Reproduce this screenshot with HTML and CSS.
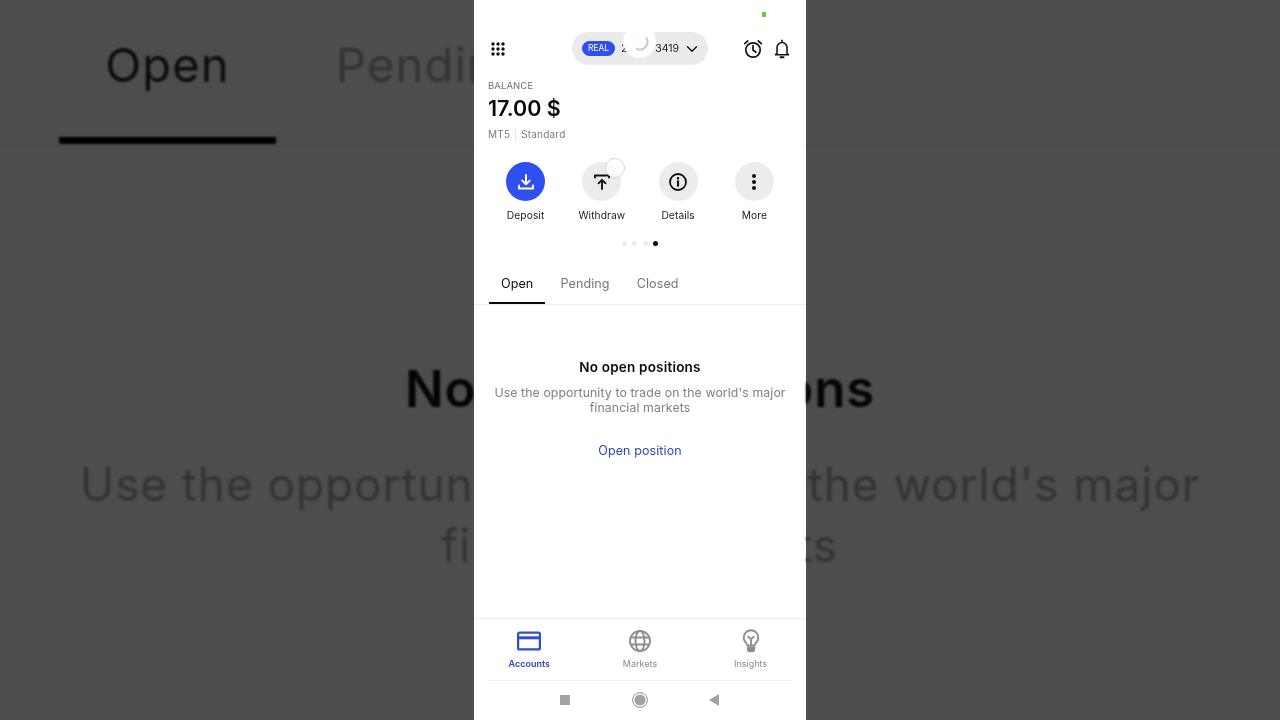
FILE: index.html
```html
<!DOCTYPE html>
<html lang="en">
<head>
<meta charset="utf-8">
<title>Accounts</title>
<link rel="stylesheet" href="styles.css">
</head>
<body>
<aside class="side side-left">
  <div class="bd-tabs">
    <div class="bd-tab bd-active">Open</div>
    <div class="bd-tab bd-muted">Pendin</div>
  </div>
  <div class="bd-title">No</div>
  <div class="bd-desc">Use the opportun</div>
  <div class="bd-desc bd-second">fi</div>
</aside>
<main class="phone">
  <span class="status-dot"></span>
  <header class="topbar">
    <svg class="grid-icon" width="14" height="14" viewBox="0 0 14 14" fill="#111"><circle cx="2" cy="2" r="1.700"/><circle cx="7" cy="2" r="1.700"/><circle cx="12" cy="2" r="1.700"/><circle cx="2" cy="7" r="1.700"/><circle cx="7" cy="7" r="1.700"/><circle cx="12" cy="7" r="1.700"/><circle cx="2" cy="12" r="1.700"/><circle cx="7" cy="12" r="1.700"/><circle cx="12" cy="12" r="1.700"/></svg>
    <div class="pill">
      <span class="badge">REAL</span>
      <span class="acct"><span>2</span><span>3419</span></span>
      <svg class="chev" width="12" height="8" viewBox="0 0 12 8" fill="none" stroke="#111" stroke-width="1.400" stroke-linecap="round" stroke-linejoin="round"><path d="M1.500 1.800L6 6.200l4.500-4.400"/></svg>
      <span class="spinner"><svg width="20" height="20" viewBox="0 0 20 20" fill="none" stroke="#c5c6e6" stroke-width="2" stroke-linecap="round"><path d="M16.500 6.300A7.500 7.500 0 0 1 7 16.900"/></svg></span>
    </div>
    <div class="top-icons">
      <svg width="20" height="20" viewBox="0 0 20 20" fill="none" stroke="#111" stroke-width="1.700" stroke-linecap="round"><circle cx="10" cy="11" r="7.200"/><path d="M10 6.500V11l3 2.200"/><path d="M1.700 4.600l3-2.600M18.300 4.600l-3-2.600"/></svg>
      <svg width="18" height="20" viewBox="0 0 18 20" fill="none" stroke="#111" stroke-width="1.500" stroke-linejoin="round" stroke-linecap="round"><path d="M4 14.500V8.500a5 5 0 0 1 10 0v6l1.500 1.200h-13z"/><path d="M9 1.200v2"/><path d="M7.500 18.300h3" stroke-width="2"/></svg>
    </div>
  </header>
  <section class="balance">
    <div class="bal-label">BALANCE</div>
    <div class="bal-value">17.00 $</div>
    <div class="bal-meta"><span>MT5</span><i class="sep"></i><span>Standard</span></div>
  </section>
  <section class="actions">
    <div class="action">
      <span class="circle circle-blue"><svg width="20" height="20" viewBox="0 0 20 20" fill="none" stroke="#fff" stroke-width="2" stroke-linecap="round" stroke-linejoin="round"><path d="M10 3v9M6.300 8.600L10 12.300l3.700-3.700"/><path d="M3 13.500v3h14v-3"/></svg></span>
      <span class="action-label">Deposit</span>
    </div>
    <div class="action">
      <span class="circle"><svg width="20" height="20" viewBox="0 0 20 20" fill="none" stroke="#111" stroke-width="1.900" stroke-linecap="round" stroke-linejoin="round"><path d="M10 17V8M6.500 11.300L10 7.800l3.500 3.500"/><path d="M3 5.500V3.500h14v2"/></svg></span>
      <span class="action-label">Withdraw</span>
      <span class="touch-ring"></span>
    </div>
    <div class="action">
      <span class="circle"><svg width="20" height="20" viewBox="0 0 20 20" fill="none" stroke="#111" stroke-width="1.800" stroke-linecap="round"><circle cx="10" cy="10" r="8"/><path d="M10 9.300v4.500" stroke-width="2.200"/><path d="M10 6.200v.2" stroke-width="2.400"/></svg></span>
      <span class="action-label">Details</span>
    </div>
    <div class="action">
      <span class="circle"><svg width="6" height="18" viewBox="0 0 6 18" fill="#111"><circle cx="3" cy="3" r="2"/><circle cx="3" cy="9" r="2"/><circle cx="3" cy="15" r="2"/></svg></span>
      <span class="action-label">More</span>
    </div>
  </section>
  <div class="pager"><i></i><i></i><i></i><i class="on"></i></div>
  <nav class="tabs">
    <span class="tab tab-on">Open</span>
    <span class="tab">Pending</span>
    <span class="tab">Closed</span>
  </nav>
  <section class="empty">
    <h2 class="empty-title">No open positions</h2>
    <p class="empty-desc">Use the opportunity to trade on the world's major financial markets</p>
    <a class="empty-link">Open position</a>
  </section>
  <nav class="bottom">
    <div class="bottom-item bottom-on">
      <svg width="24" height="20" viewBox="0 0 24 20" fill="none" stroke="#2c4fd8" stroke-width="2.200" stroke-linejoin="round"><rect x="1.100" y="1.600" width="21.800" height="16.800" rx="1.500"/><path d="M1 6.800h22" stroke-width="3"/></svg>
      <span>Accounts</span>
    </div>
    <div class="bottom-item">
      <svg width="24" height="24" viewBox="0 0 24 24" fill="none" stroke="#8e8e8e" stroke-width="1.900"><circle cx="12" cy="12" r="10"/><ellipse cx="12" cy="12" rx="4.500" ry="10"/><path d="M2.800 8.500h18.400M2.800 15.500h18.400"/></svg>
      <span>Markets</span>
    </div>
    <div class="bottom-item">
      <svg width="18" height="24" viewBox="0 0 18 24" fill="none" stroke="#8e8e8e" stroke-width="1.900" stroke-linecap="round"><path d="M5.500 16.500c0-2-3.800-3.500-3.800-8a7.300 7.300 0 0 1 14.600 0c0 4.500-3.800 6-3.800 8z"/><path d="M6.300 7.800L9 10.300l2.700-2.500M9 10.300v6"/><path d="M5.800 18.500h6.400v2.200a1.500 1.500 0 0 1-1.500 1.500H7.300a1.500 1.500 0 0 1-1.500-1.500z" fill="#8e8e8e"/></svg>
      <span>Insights</span>
    </div>
  </nav>
  <div class="android">
    <span class="a-square"></span>
    <span class="a-circle"></span>
    <span class="a-back"></span>
  </div>
</main>
<aside class="side side-right">
  <div class="bd-tabs"></div>
  <div class="bd-title bd-title-r">ons</div>
  <div class="bd-desc bd-desc-r">the world's major</div>
  <div class="bd-desc bd-second bd-ts">ts</div>
</aside>
</body>
</html>
```
FILE: styles.css
```css
* { box-sizing: border-box; }
html, body { margin: 0; height: 100%; }
body {
  width: 1280px;
  height: 720px;
  overflow: hidden;
  background: #4d4d4d;
  display: flex;
  font-family: "Inter", "Liberation Sans", sans-serif;
}

/* blurred, enlarged video frame either side of the phone */
.side {
  flex: none;
  width: 474px;
  height: 720px;
  overflow: hidden;
  filter: blur(1px);
  color: #343434;
  white-space: nowrap;
}
.bd-tabs {
  display: flex;
  height: 147px;
  padding-left: 59px;
  border-bottom: 1px solid #474747;
}
.bd-tab {
  flex: none;
  font-size: 47px;
  letter-spacing: 1.200px;
  padding-top: 36px;
  text-align: center;
}
.bd-active {
  width: 217px;
  height: 144px;
  color: #0c0c0c;
  border-bottom: 7px solid #000;
  border-radius: 0 0 2px 2px;
}
.bd-muted { width: 138px; margin-left: 60px; overflow: hidden; text-align: left; }
.bd-title {
  margin-top: 212px;
  padding-left: 405px;
  font-size: 51px;
  letter-spacing: .8px;
  font-weight: 600;
  color: #050505;
  line-height: 60px;
}
.bd-title-r { display: flex; justify-content: flex-end; padding-left: 0; padding-right: 405px; }
.bd-desc {
  margin-top: 36px;
  padding-left: 80px;
  font-size: 46px;
  letter-spacing: .9px;
  line-height: 58px;
}
.bd-desc-r { padding-left: 0; text-align: right; padding-right: 80px; }
.bd-second { margin-top: 3px; padding-left: 441px; }
.bd-ts { display: flex; justify-content: flex-end; padding-left: 0; padding-right: 442px; }

.phone {
  position: relative;
  flex: none;
  width: 332px;
  height: 720px;
  background: #fff;
  display: flex;
  flex-direction: column;
  color: #111;
  filter: blur(.3px);
}
.status-dot {
  position: absolute;
  left: 288px;
  top: 12px;
  width: 4px;
  height: 5px;
  background: #72c63a;
}

.topbar {
  margin-top: 32px;
  height: 33px;
  display: grid;
  grid-template-columns: 98px 136px 98px;
  align-items: center;
}
.grid-icon { margin-left: 17px; }
.pill {
  position: relative;
  height: 33px;
  border-radius: 17px;
  background: #ebebeb;
  display: flex;
  align-items: center;
  padding: 0 10px;
  gap: 6px;
}
.badge {
  width: 33px;
  height: 15px;
  border-radius: 8px;
  background: #2f4ff2;
  color: #fff;
  font-size: 8.500px;
  line-height: 15px;
  text-align: center;
}
.acct {
  width: 58px;
  display: flex;
  justify-content: space-between;
  font-size: 10.500px;
  color: #222;
}
.chev { margin-left: 1px; }
.spinner {
  position: absolute;
  left: 51px;
  top: -7px;
  width: 33px;
  height: 33px;
  border-radius: 50%;
  background: rgba(255, 255, 255, .93);
  display: flex;
  align-items: center;
  justify-content: center;
}
.top-icons {
  display: flex;
  align-items: center;
  justify-content: flex-end;
  gap: 10px;
  margin-top: 1px;
  padding-right: 15px;
}

.balance { padding: 14px 14px 0; }
.bal-label { font-size: 9.500px; letter-spacing: .1px; line-height: 14px; color: #6f6f6f; }
.bal-value { font-size: 21.500px; line-height: 30px; font-weight: 600; color: #0a0a0a; }
.bal-meta {
  margin-top: 4px;
  font-size: 10px;
  letter-spacing: .2px;
  line-height: 14px;
  color: #7c7c7c;
  display: flex;
  align-items: center;
  gap: 5px;
}
.sep { width: 1px; height: 13px; background: #e6e6e6; }

.actions {
  margin-top: 21px;
  padding: 0 13.500px;
  display: grid;
  grid-template-columns: repeat(4, 1fr);
}
.action {
  position: relative;
  display: flex;
  flex-direction: column;
  align-items: center;
  gap: 8px;
}
.circle {
  width: 39px;
  height: 39px;
  border-radius: 50%;
  background: #ececec;
  display: flex;
  align-items: center;
  justify-content: center;
}
.circle-blue { background: #2f4ff2; }
.action-label { font-size: 10.200px; letter-spacing: .1px; line-height: 13px; color: #1c1c1c; }
.touch-ring {
  position: absolute;
  left: 41px;
  top: -4px;
  width: 20px;
  height: 20px;
  border-radius: 50%;
  border: 1.500px solid #d3d6ea;
  background: rgba(255, 255, 255, .75);
}

.pager {
  margin-top: 19px;
  display: flex;
  justify-content: center;
  gap: 5px;
}
.pager i { width: 5px; height: 5px; border-radius: 50%; background: #ececec; margin: 0 .3px; }
.pager i.on { background: #0a0a0a; }

.tabs {
  margin-top: 19px;
  height: 40px;
  padding-left: 15px;
  display: flex;
  border-bottom: 1px solid #ebebeb;
}
.tab {
  height: 39px;
  padding: 0 12px;
  margin-right: 3.200px;
  font-size: 12.600px;
  letter-spacing: .05px;
  line-height: 37px;
  color: #777;
}
.tab-on { color: #0c0c0c; border-bottom: 2px solid #0a0a0a; }

.empty {
  flex: 1;
  padding: 53px 14px 0;
  text-align: center;
}
.empty-title { margin: 0; font-size: 13.500px; letter-spacing: .2px; line-height: 18px; font-weight: 600; color: #0c0c0c; }
.empty-desc { margin: 9px 0 0; font-size: 12.300px; letter-spacing: .1px; line-height: 15px; color: #808080; }
.empty-link { display: block; margin-top: 27px; font-size: 12.500px; letter-spacing: .1px; line-height: 18px; color: #2a49b5; }

.bottom {
  height: 62px;
  border-top: 1px solid #eeeeee;
  display: grid;
  grid-template-columns: repeat(3, 1fr);
}
.bottom-item {
  height: 61px;
  padding-top: 10px;
  display: flex;
  flex-direction: column;
  align-items: center;
  gap: 5px;
  font-size: 9px;
  line-height: 12px;
  color: #8a8a8a;
}
.bottom-item svg { height: 24px; }
.bottom-on { color: #2c4bbb; font-weight: 600; }

.android {
  height: 40px;
  margin: 0 14px;
  padding-bottom: 1px;
  border-top: 1px solid #f0f0f0;
  display: flex;
  align-items: center;
  justify-content: center;
  gap: 62px;
}
.a-square { width: 10px; height: 10px; background: #a2a2a2; }
.a-circle {
  width: 16px;
  height: 16px;
  border-radius: 50%;
  background: #a2a2a2;
  border: 1.500px solid #a2a2a2;
  box-shadow: inset 0 0 0 1.500px #fff;
}
.a-back {
  width: 0;
  height: 0;
  margin: 0 1px 0 -1px;
  border-top: 6px solid transparent;
  border-bottom: 6px solid transparent;
  border-right: 10px solid #a2a2a2;
}
```
